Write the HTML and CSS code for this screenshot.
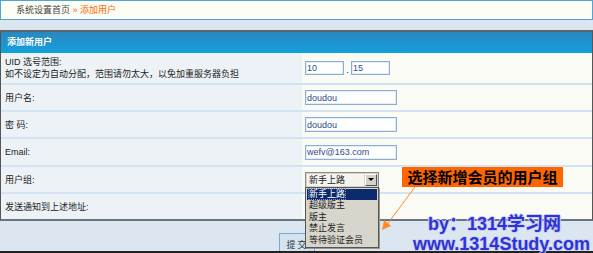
FILE: index.html
```html
<!DOCTYPE html>
<html lang="zh-CN">
<head>
  <meta charset="UTF-8" />
  <title>添加用户</title>
  <link rel="stylesheet" href="styles.css">
</head>
<body>
  <div class="page">
    <div class="crumb">系统设置首页 <span class="here">» 添加用户</span></div>
    <div class="band"></div>

    <div class="panel">
      <div class="panel-head">添加新用户</div>

      <div class="row row-tall">
        <div class="label">UID 选号范围:<br>如不设定为自动分配，范围请勿太大，以免加重服务器负担</div>
        <div class="field">
          <input class="inp inp-short" type="text" value="10" />
          <span class="dot">.</span>
          <input class="inp inp-short" type="text" value="15" />
        </div>
      </div>
      <div class="row">
        <div class="label">用户名:</div>
        <div class="field"><input class="inp" type="text" value="doudou" /></div>
      </div>
      <div class="row">
        <div class="label">密 码:</div>
        <div class="field"><input class="inp" type="text" value="doudou" /></div>
      </div>
      <div class="row row-email">
        <div class="label">Email:</div>
        <div class="field"><input class="inp" type="text" value="wefv@163.com" /></div>
      </div>
      <div class="row">
        <div class="label">用户组:</div>
        <div class="field">
          <div class="select">
            <span class="select-value">新手上路</span>
            <span class="select-btn"><span class="caret"></span></span>
            <ul class="select-list">
              <li class="active"><span>新手上路</span></li>
              <li>超级版主</li>
              <li>版主</li>
              <li>禁止发言</li>
              <li>等待验证会员</li>
            </ul>
          </div>
        </div>
      </div>
      <div class="row row-last">
        <div class="label">发送通知到上述地址:</div>
        <div class="field"></div>
      </div>
    </div>

    <div class="actions">
      <button class="submit">提 交</button>
    </div>

    <div class="callout">选择新增会员的用户组</div>
    <svg class="arrow" width="593" height="253" viewBox="0 0 593 253">
      <line x1="415" y1="187" x2="386" y2="226" stroke="#ff8a2a" stroke-width="1" />
      <path d="M382 230 L384 220 L391 226 Z" fill="#ff8a2a" />
    </svg>
    <div class="mark">
      <div class="mark-1">by：1314学习网</div>
      <div class="mark-2">www.1314Study.com</div>
    </div>
  </div>
</body>
</html>
```

FILE: styles.css
```css
body {
  margin: 0;
  background: #dce6f1;
  font-family: "Liberation Sans", "Noto Sans CJK SC", sans-serif;
  font-size: 9px;
  color: #222;
  overflow: hidden;
}
.page {
  position: relative;
  width: 593px;
  height: 253px;
  overflow: hidden;
}
.crumb {
  height: 18px;
  line-height: 18px;
  padding-left: 15px;
  background: #fcfdf4;
  border: 1px solid #4ea6d6;
  color: #444;
}
.crumb .here {
  color: #ff6600;
}
.band {
  height: 10px;
  background: #dbe5f0;
}
.panel {
  border-top: 2px solid #5b6670;
  border-left: 1px solid #555;
  border-right: 1px solid #555;
  border-bottom: 2px solid #6a7480;
}
.panel-head {
  height: 21px;
  line-height: 21px;
  padding-left: 6px;
  background: linear-gradient(#2a88bf, #12a0dc);
  color: #fff;
  font-weight: bold;
}
.row {
  display: flex;
  height: 25px;
  border-bottom: 2px solid #d2e3f3;
}
.row-tall {
  height: 30px;
}
.row-email {
  height: 26px;
}
.row-last {
  height: 25px;
  border-bottom: none;
}
.label {
  width: 297px;
  padding-left: 4px;
  display: flex;
  align-items: center;
  line-height: 12px;
  background: #edf2f7;
}
.field {
  flex: 1;
  display: flex;
  align-items: center;
  padding-left: 3px;
  background: #fafbf5;
}
.inp {
  box-sizing: border-box;
  width: 92px;
  height: 15px;
  padding: 0 1px;
  border: 1px solid #8cadd4;
  box-shadow: inset 0 0 0 1px #e3ecf6;
  background: #fff;
  color: #2f4c86;
  font-family: "Liberation Sans", sans-serif;
  font-size: 9px;
  outline: none;
}
.inp-short {
  width: 39px;
  height: 14px;
}
.dot {
  width: 7px;
  text-align: center;
  padding-top: 4px;
}
.select {
  position: relative;
  display: flex;
  width: 72px;
  height: 14px;
  border: 1px solid #8e8a84;
  background: #d6d3cb;
}
.select-value {
  flex: 1;
  margin: 1px;
  padding-left: 2px;
  line-height: 12px;
  background: #f4f3ee;
  color: #222;
}
.select-btn {
  width: 12px;
  margin: 1px 1px 1px 0;
  display: flex;
  align-items: center;
  justify-content: center;
  background: #d4d0c8;
  border: 1px solid #fff;
  border-right-color: #555;
  border-bottom-color: #555;
  box-sizing: border-box;
}
.caret {
  border-left: 3px solid transparent;
  border-right: 3px solid transparent;
  border-top: 3px solid #000;
}
.select-list {
  position: absolute;
  top: 14px;
  left: -1px;
  width: 72px;
  margin: 0;
  padding: 1px 0 1px;
  list-style: none;
  background: #d8d5cd;
  border: 1px solid #555;
  box-shadow: 1px 1px 0 #9a978f;
}
.select-list li {
  height: 11.5px;
  line-height: 11.5px;
  padding-left: 2px;
  margin: 0 1px;
  color: #222;
}
.select-list li.active {
  background: #0b2a6e;
  color: #fff;
}
.select-list li.active span {
  outline: 1px dotted #8a96c0;
}
.actions {
  height: 30px;
  display: flex;
  justify-content: center;
  background: #dbe6f1;
  border-bottom: 2px solid #222;
  overflow: hidden;
}
.submit {
  margin-top: 12px;
  width: 36px;
  height: 22px;
  padding: 0;
  background: #d3e3f2;
  border: 1px solid #7ea7cf;
  color: #333;
  font-family: "Noto Sans CJK SC", sans-serif;
  font-size: 9px;
}
.callout {
  position: absolute;
  left: 402px;
  top: 167px;
  width: 161px;
  height: 20px;
  line-height: 20px;
  text-align: center;
  background: #ff6600;
  color: #000;
  font-family: "Noto Sans CJK SC", sans-serif;
  font-size: 15px;
  font-weight: bold;
}
.arrow {
  position: absolute;
  left: 0;
  top: 0;
}
.mark {
  position: absolute;
  left: 0;
  top: 214px;
  color: #2e33d4;
  font-family: "Liberation Sans", "Noto Sans CJK SC", sans-serif;
  font-size: 18px;
  font-weight: bold;
  line-height: 20px;
  white-space: nowrap;
  text-shadow: 1px 0 #c9cdf5, -1px 0 #c9cdf5, 0 1px #c9cdf5, 0 -1px #c9cdf5;
}
.mark-1 {
  margin-left: 428px;
}
.mark-2 {
  margin-left: 413px;
}
```
